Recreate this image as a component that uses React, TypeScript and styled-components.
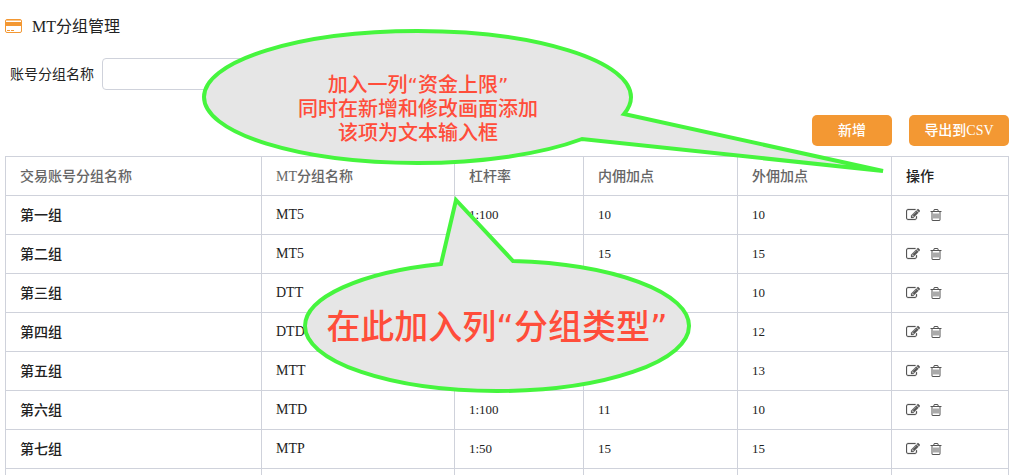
import React from "react";
import styled, { createGlobalStyle } from "styled-components";

const GlobalStyle = createGlobalStyle`
  *, *::before, *::after { box-sizing: border-box; }
  body {
    margin: 0;
    background: #fff;
    color: #222;
    font-family: "Liberation Serif", "Noto Sans CJK SC", serif;
    font-size: 14px;
  }
`;

const Page = styled.main`
  position: relative;
  height: 100vh;
  overflow: hidden;
  padding: 16px 5px 0;
`;

const Header = styled.header`
  display: flex;
  align-items: center;
  gap: 9px;
  height: 22px;
`;

const Title = styled.h1`
  margin: 0;
  font-size: 16px;
  line-height: 22px;
  font-weight: 400;
`;

const SearchForm = styled.form`
  display: flex;
  align-items: center;
  gap: 8px;
  margin-top: 20px;
  padding-left: 5px;
`;

const Label = styled.label`
  padding-top: 2px;
  line-height: 20px;
`;

const TextInput = styled.input`
  width: 240px;
  height: 32px;
  padding: 0 8px;
  border: 1px solid #cfd2db;
  border-radius: 4px;
  font: inherit;
`;

const Toolbar = styled.div`
  display: flex;
  justify-content: flex-end;
  gap: 17px;
  margin: 25px 0 10px;
`;

const Button = styled.button<{ $width: number }>`
  width: ${({ $width }) => $width}px;
  height: 31px;
  padding: 0;
  border: 0;
  border-radius: 5px;
  background: #f39833;
  color: #fff;
  font: inherit;
  font-weight: 500;
  line-height: 20px;
`;

const Table = styled.table`
  width: 100%;
  table-layout: fixed;
  border-collapse: collapse;
`;

const Col = styled.col<{ $width?: number }>`
  width: ${({ $width }) => ($width ? `${$width}px` : "auto")};
`;

const HeadCell = styled.th<{ $dark?: boolean }>`
  height: 39px;
  padding: 2px 14px 0;
  border: 1px solid #cfd2db;
  color: ${({ $dark }) => ($dark ? "#222" : "#666")};
  font-weight: 500;
  line-height: 20px;
  text-align: left;
`;

const Cell = styled.td`
  height: 39px;
  padding: 0 14px;
  border: 1px solid #cfd2db;
  line-height: 20px;
`;

const NameCell = styled(Cell)`
  padding-top: 2px;
  font-weight: 500;
`;

const NumberCell = styled(Cell)`
  font-size: 13px;
`;

const Actions = styled.div`
  display: flex;
  align-items: center;
  gap: 9px;
`;

const IconButton = styled.button`
  display: flex;
  padding: 0;
  border: 0;
  background: none;
  color: #555;
`;

const Callout = styled.aside<{ $left: number; $top: number; $width: number; $height: number }>`
  position: absolute;
  left: ${({ $left }) => $left}px;
  top: ${({ $top }) => $top}px;
  width: ${({ $width }) => $width}px;
  height: ${({ $height }) => $height}px;
  pointer-events: none;
`;

const Bubble = styled.svg`
  display: block;
  fill: #e6e6e6;
  stroke: #46f53e;
  stroke-width: 4;
  stroke-miterlimit: 4;
`;

const Note = styled.div<{ $top: number; $width: number; $large?: boolean }>`
  position: absolute;
  left: 0;
  top: ${({ $top }) => $top}px;
  width: ${({ $width }) => $width}px;
  color: #ff4d3a;
  font-family: "DejaVu Sans", "Noto Sans CJK SC", sans-serif;
  font-size: ${({ $large }) => ($large ? 34 : 20)}px;
  line-height: ${({ $large }) => ($large ? 40 : 24)}px;
  font-weight: 500;
  text-align: center;
  white-space: nowrap;
`;

const NoteLine = styled.p`
  margin: 0;
`;

const CardIcon = () => (
  <svg width="18" height="16" viewBox="0 0 18 16" aria-hidden="true">
    <rect x="0.5" y="0.5" width="16" height="13" rx="1.5" fill="#fff" stroke="#f39833" />
    <path d="M1 1h15v1H1z" fill="#f9c68c" />
    <path d="M1 3h15v4H1z" fill="#f39833" />
    <path d="M2 11.500h3M6 11.500h3" stroke="#f39833" />
  </svg>
);

const EditIcon = () => (
  <svg width="14" height="14" viewBox="0 0 1792 1792" fill="currentColor" stroke="currentColor" strokeWidth="30" aria-hidden="true">
    <path d="M888 1184l116-116-152-152-116 116v56h96v96h56zm440-720q-16-16-33 1l-350 350q-17 17-1 33t33-1l350-350q17-17 1-33zm80 594v190q0 119-84.500 203.500t-203.500 84.500h-832q-119 0-203.500-84.500t-84.500-203.500v-832q0-119 84.500-203.500t203.500-84.500h832q63 0 117 25 15 7 18 23 3 17-9 29l-49 49q-14 14-32 8-23-6-45-6h-832q-66 0-113 47t-47 113v832q0 66 47 113t113 47h832q66 0 113-47t47-113v-126q0-13 9-22l64-64q15-15 35-7t20 29zm-96-738l288 288-672 672h-288v-288zm444 132l-92 92-288-288 92-92q28-28 68-28t68 28l152 152q28 28 28 68t-28 68z" />
  </svg>
);

const TrashIcon = () => (
  <svg width="14" height="14" viewBox="0 0 1792 1792" fill="currentColor" aria-hidden="true">
    <path d="M704 736v576q0 14-9 23t-23 9h-64q-14 0-23-9t-9-23v-576q0-14 9-23t23-9h64q14 0 23 9t9 23zm256 0v576q0 14-9 23t-23 9h-64q-14 0-23-9t-9-23v-576q0-14 9-23t23-9h64q14 0 23 9t9 23zm256 0v576q0 14-9 23t-23 9h-64q-14 0-23-9t-9-23v-576q0-14 9-23t23-9h64q14 0 23 9t9 23zm128 724v-948h-896v948q0 22 7 40.500t14.500 27 10.500 8.500h832q3 0 10.500-8.500t14.500-27 7-40.500zm-672-1076h448l-48-117q-7-9-17-11h-317q-10 2-17 11zm928 32v64q0 14-9 23t-23 9h-96v948q0 83-47 143.500t-113 60.500h-832q-66 0-113-58.500t-47-141.500v-952h-96q-14 0-23-9t-9-23v-64q0-14 9-23t23-9h309l70-167q15-37 54-63t79-26h320q40 0 79 26t54 63l70 167h309q14 0 23 9t9 23z" />
  </svg>
);

const headings = ["交易账号分组名称", "MT分组名称", "杠杆率", "内佣加点", "外佣加点"];

type Group = { name: string; mt: string; leverage?: string; inner?: number; outer: number };

const groups: Group[] = [
  { name: "第一组", mt: "MT5", leverage: "1:100", inner: 10, outer: 10 },
  { name: "第二组", mt: "MT5", inner: 15, outer: 15 },
  { name: "第三组", mt: "DTT", outer: 10 },
  { name: "第四组", mt: "DTD", outer: 12 },
  { name: "第五组", mt: "MTT", outer: 13 },
  { name: "第六组", mt: "MTD", leverage: "1:100", inner: 11, outer: 10 },
  { name: "第七组", mt: "MTP", leverage: "1:50", inner: 15, outer: 15 },
];

export default function App() {
  return (
    <>
      <GlobalStyle />
      <Page>
        <Header>
          <CardIcon />
          <Title>MT分组管理</Title>
        </Header>
        <SearchForm>
          <Label htmlFor="group-name">账号分组名称</Label>
          <TextInput id="group-name" type="text" />
        </SearchForm>
        <Toolbar>
          <Button type="button" $width={80}>新增</Button>
          <Button type="button" $width={100}>导出到CSV</Button>
        </Toolbar>
        <Table>
          <colgroup>
            <Col />
            <Col $width={193} />
            <Col $width={129} />
            <Col $width={154} />
            <Col $width={154} />
            <Col $width={117} />
          </colgroup>
          <thead>
            <tr>
              {headings.map((heading) => (
                <HeadCell key={heading} scope="col">{heading}</HeadCell>
              ))}
              <HeadCell scope="col" $dark>操作</HeadCell>
            </tr>
          </thead>
          <tbody>
            {groups.map((group) => (
              <tr key={group.name}>
                <NameCell>{group.name}</NameCell>
                <Cell>{group.mt}</Cell>
                <NumberCell>{group.leverage}</NumberCell>
                <NumberCell>{group.inner}</NumberCell>
                <NumberCell>{group.outer}</NumberCell>
                <Cell>
                  <Actions>
                    <IconButton type="button" aria-label="修改"><EditIcon /></IconButton>
                    <IconButton type="button" aria-label="删除"><TrashIcon /></IconButton>
                  </Actions>
                </Cell>
              </tr>
            ))}
            <tr>
              <Cell /><Cell /><Cell /><Cell /><Cell /><Cell />
            </tr>
          </tbody>
        </Table>

        <Callout $left={200} $top={27} $width={690} $height={150}>
          <Bubble width="690" height="150" viewBox="200 27 690 150" aria-hidden="true">
            <path d="M624 114A213.500 66 0 0 0 631 97A213.500 66 0 0 0 417.500 31A213.500 66 0 0 0 204 97A213.500 66 0 0 0 417.500 163A213.500 66 0 0 0 582 139L883 171Z" />
          </Bubble>
          <Note $top={46} $width={436}>
            <NoteLine>加入一列“资金上限”</NoteLine>
            <NoteLine>同时在新增和修改画面添加</NoteLine>
            <NoteLine>该项为文本输入框</NoteLine>
          </Note>
        </Callout>
        <Callout $left={301} $top={192} $width={392} $height={204}>
          <Bubble width="392" height="204" viewBox="301 192 392 204" aria-hidden="true">
            <path d="M441 264A192 65 0 0 0 305 326A192 65 0 0 0 497 391A192 65 0 0 0 689 326A192 65 0 0 0 513 261L456 200Z" />
          </Bubble>
          <Note $top={115} $width={392} $large>
            <NoteLine>在此加入列“分组类型”</NoteLine>
          </Note>
        </Callout>
      </Page>
    </>
  );
}
